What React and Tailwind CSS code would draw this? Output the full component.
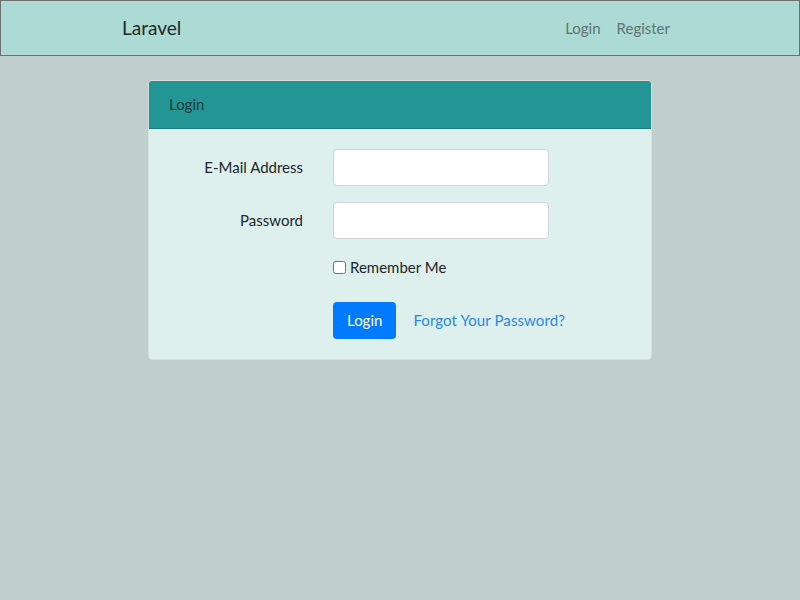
import React from 'react';

const App = () => {
  return (
    <div
      className="min-h-[600px] bg-[#c0cfcd] text-[15px] text-[#212529]"
      style={{ fontFamily: 'Lato, "Open Sans", sans-serif' }}
    >
      {/* Navbar */}
      <nav className="h-[56px] bg-[#acdad5] border border-[#6f6f6f]">
        <div className="flex items-center justify-between h-full pl-[121px] pr-[129px]">
          <a className="text-[19px] text-[#1e2a2a]">Laravel</a>
          <div className="flex gap-[16px] text-[15px] text-[#5f7472]">
            <a>Login</a>
            <a>Register</a>
          </div>
        </div>
      </nav>

      {/* Login card */}
      <div className="flex justify-center pt-[24px]">
        <div className="w-[504px] rounded-[4px] border border-[#d4e0de] overflow-hidden">
          <div className="h-[48px] bg-[#239595] border-b border-[#1c7b7b] flex items-center px-[20px] text-[#1c3a3a]">
            Login
          </div>
          <div className="bg-[#ddf0ed] pt-[20px] pb-[20px]">
            <div className="flex items-center h-[37px] mb-[16px]">
              <label className="w-[154px] text-right">E-Mail Address</label>
              <input
                type="email"
                className="ml-[30px] w-[216px] h-[37px] bg-white border border-[#ced4da] rounded-[4px]"
              />
            </div>
            <div className="flex items-center h-[37px] mb-[16px]">
              <label className="w-[154px] text-right">Password</label>
              <input
                type="password"
                className="ml-[30px] w-[216px] h-[37px] bg-white border border-[#ced4da] rounded-[4px]"
              />
            </div>
            <div className="flex items-center ml-[184px] h-[24px] mb-[23px]">
              <input type="checkbox" className="w-[13px] h-[13px] m-0" />
              <span className="ml-[4px]">Remember Me</span>
            </div>
            <div className="flex items-center ml-[184px]">
              <button className="h-[37px] px-[14px] bg-[#007bff] text-white rounded-[4px]">
                Login
              </button>
              <a className="ml-[17px] text-[#2a86f0] tracking-[0.1px]">Forgot Your Password?</a>
            </div>
          </div>
        </div>
      </div>
    </div>
  );
};

export default App;
